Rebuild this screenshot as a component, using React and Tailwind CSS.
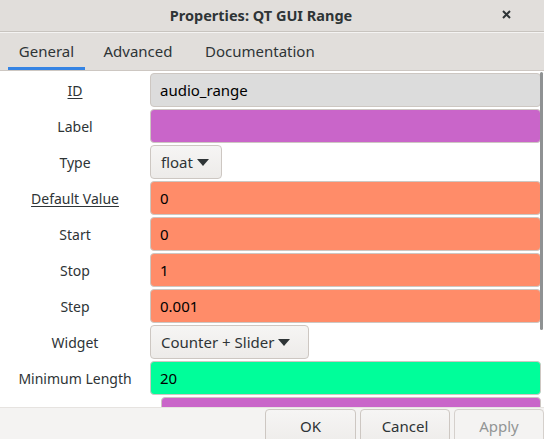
import React from "react";

const rows = [
  { label: "ID", underline: true, value: "audio_range", kind: "field", color: "bg-[#dcdcdc]" },
  { label: "Label", value: "", kind: "field", color: "bg-[#c965c9]" },
  { label: "Type", value: "float", kind: "combo", width: "w-[72px]" },
  { label: "Default Value", underline: true, value: "0", kind: "field", color: "bg-[#ff8c69]" },
  { label: "Start", value: "0", kind: "field", color: "bg-[#ff8c69]" },
  { label: "Stop", value: "1", kind: "field", color: "bg-[#ff8c69]" },
  { label: "Step", value: "0.001", kind: "field", color: "bg-[#ff8c69]" },
  { label: "Widget", value: "Counter + Slider", kind: "combo", width: "w-[159px]" },
  { label: "Minimum Length", value: "20", kind: "field", color: "bg-[#00fe9a]" },
];

function Caret() {
  return (
    <svg width="12" height="7" viewBox="0 0 12 7" className="ml-[4px]">
      <path d="M0 0 L12 0 L6 7 Z" fill="#2e3436" />
    </svg>
  );
}

function Row({ row }) {
  return (
    <div className="flex items-center h-[36px]">
      <div className="w-[150px] shrink-0 text-center text-[14px] text-[#2e3436]">
        <span className={row.underline ? "underline underline-offset-2" : ""}>{row.label}</span>
      </div>
      {row.kind === "field" ? (
        <div
          className={`flex-1 mr-[3px] h-[34px] rounded-[4px] border border-[#cdc7c2] ${row.color} flex items-center pl-[9px] text-[15px] text-black`}
        >
          {row.value}
        </div>
      ) : (
        <div
          className={`${row.width} h-[34px] rounded-[4px] border border-[#cdc7c2] bg-gradient-to-b from-[#f6f5f4] to-[#edebe9] flex items-center pl-[10px] text-[15px] text-[#2e3436]`}
        >
          {row.value}
          <Caret />
        </div>
      )}
    </div>
  );
}

export default function App() {
  return (
    <div
      className="w-[544px] h-[439px] overflow-hidden flex flex-col bg-white"
      style={{ fontFamily: '"Noto Sans", "Open Sans", sans-serif' }}
    >
      <div className="h-[32px] shrink-0 bg-[#e1dedb] border-b border-[#c8c4bf] flex items-center relative">
        <div className="flex-1 text-center font-bold text-[14.5px] text-[#2e3436] pr-[22px]">
          Properties: QT GUI Range
        </div>
        <svg width="9" height="9" viewBox="0 0 9 9" className="absolute right-[33px] top-[10px]">
          <path d="M1 1 L8 8 M8 1 L1 8" stroke="#2e3436" strokeWidth="2" />
        </svg>
      </div>
      <div className="h-[39px] shrink-0 bg-[#e1dedb] border-t border-[#f4f3f2] border-b border-b-[#cdc7c2] flex items-end px-[8px]">
        <div className="w-[77px] h-full flex flex-col">
          <div className="flex-1 flex items-center justify-center pt-[3px] text-[15px] text-[#2e3436]">General</div>
          <div className="h-[3px] bg-[#3584e4]" />
        </div>
        <div className="w-[106px] h-full flex items-center justify-center text-[15px] text-[#2e3436]">
          Advanced
        </div>
        <div className="pl-[14px] h-full flex items-center text-[15px] text-[#2e3436]">Documentation</div>
      </div>
      <div className="flex-1 relative overflow-hidden pt-[1px]">
        {rows.map((r) => (
          <Row key={r.label} row={r} />
        ))}
        <div className="ml-[161px] mr-[3px] mt-[1px] h-[34px] rounded-[4px] border border-[#cdc7c2] bg-[#c965c9]" />
        <div className="absolute right-[1px] top-[1px] w-[3px] h-[258px] rounded-full bg-[#8f9293]" />
      </div>
      <div className="h-[32px] shrink-0 bg-[#f4f3f2] border-t border-[#e6e3e0] flex justify-end items-start pt-[1px] gap-[4px]">
        <div className="w-[91px] h-[40px] rounded-[4px] border border-[#cdc7c2] bg-gradient-to-b from-[#f6f5f4] to-[#edebe9] flex justify-center pt-[5px] text-[15px] text-[#2e3436]">
          OK
        </div>
        <div className="w-[90px] h-[40px] rounded-[4px] border border-[#cdc7c2] bg-gradient-to-b from-[#f6f5f4] to-[#edebe9] flex justify-center pt-[5px] text-[15px] text-[#2e3436]">
          Cancel
        </div>
        <div className="w-[90px] h-[40px] rounded-[4px] border border-[#d5d0cc] bg-[#f4f3f2] flex justify-center pt-[5px] text-[15px] text-[#929595]">
          Apply
        </div>
      </div>
    </div>
  );
}
